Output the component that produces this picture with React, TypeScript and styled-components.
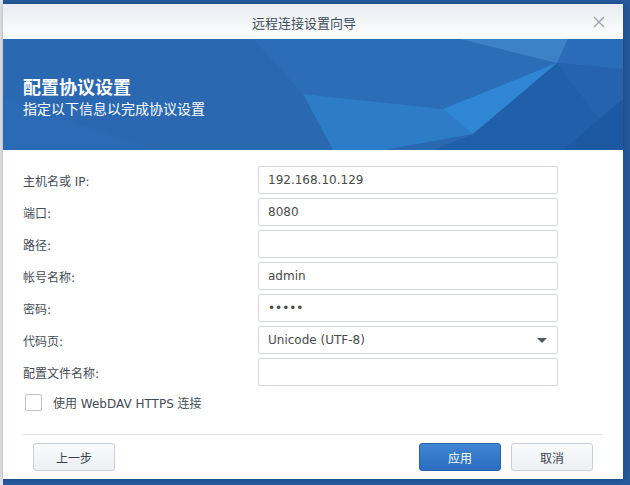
import styled, { createGlobalStyle } from "styled-components";

const GlobalStyle = createGlobalStyle`
  html, body {
    margin: 0;
    padding: 0;
    background: #24599c;
  }
  body {
    font-family: "DejaVu Sans", "Noto Sans CJK SC", sans-serif;
    font-size: 12px;
    color: #444;
  }
  * {
    box-sizing: border-box;
  }
`;

const Page = styled.div`
  width: 630px;
  height: 485px;
  padding: 4px 7px 6px 3px;
  background: linear-gradient(90deg, #dfe3e8 0, #dfe3e8 3px, #24599c 3px);
`;

const Dialog = styled.div`
  width: 620px;
  height: 475px;
  background: #fff;
  display: flex;
  flex-direction: column;
  box-shadow: 0 0 4px rgba(0, 0, 0, 0.25);
`;

const TitleBar = styled.div`
  height: 35px;
  display: grid;
  grid-template-columns: 1fr auto 1fr;
  align-items: center;
  background: linear-gradient(180deg, #e7ebf0 0%, #f6f8fa 60%, #fbfcfd 100%);
  padding-right: 18px;
`;

const Title = styled.div`
  grid-column: 2;
  font-family: "Noto Sans CJK SC", sans-serif;
  font-size: 13px;
  color: #3c4b5c;
  padding-top: 1px;
`;

const CloseButton = styled.div`
  grid-column: 3;
  justify-self: end;
  width: 12px;
  height: 12px;
  display: flex;
`;

const Banner = styled.div`
  position: relative;
  height: 111px;
  background: #2a68b1;
  overflow: hidden;
  padding: 34px 20px 0;
  color: #fff;
`;

const BannerArt = styled.svg`
  position: absolute;
  inset: 0;
`;

const BannerText = styled.div`
  position: relative;
  display: flex;
  flex-direction: column;
`;

const Heading = styled.div`
  font-family: "Noto Sans CJK SC", sans-serif;
  font-weight: 700;
  font-size: 18px;
  line-height: 26px;
`;

const SubHeading = styled.div`
  font-family: "Noto Sans CJK SC", sans-serif;
  font-size: 14px;
  line-height: 20px;
  margin-top: -1px;
`;

const Form = styled.div`
  flex: 1;
  padding: 16px 20px 0;
  display: flex;
  flex-direction: column;
`;

const Grid = styled.div`
  display: grid;
  grid-template-columns: 235px 300px;
  grid-auto-rows: 28px;
  row-gap: 4px;
  align-items: center;
`;

const Label = styled.div`
  color: #444c55;
`;

const Field = styled.input`
  width: 100%;
  height: 28px;
  border: 1px solid #d3d8de;
  border-radius: 2px;
  padding: 0 9px;
  font-family: "DejaVu Sans", "Noto Sans CJK SC", sans-serif;
  font-size: 12px;
  color: #4a4a4a;
  background: #fff;
  outline: none;
`;

const Select = styled.div`
  height: 28px;
  border: 1px solid #d3d8de;
  border-radius: 2px;
  padding: 0 10px 0 9px;
  display: flex;
  align-items: center;
  justify-content: space-between;
  color: #4a4a4a;
`;

const Caret = styled.span`
  width: 0;
  height: 0;
  border-left: 5px solid transparent;
  border-right: 5px solid transparent;
  border-top: 5px solid #505860;
`;

const CheckRow = styled.label`
  margin-top: 8px;
  padding-left: 2px;
  display: flex;
  align-items: center;
  gap: 11px;
  color: #444c55;
`;

const Box = styled.span`
  width: 17px;
  height: 17px;
  border: 1px solid #bcc3cb;
  border-radius: 2px;
  background: #fff;
`;

const Separator = styled.div`
  height: 1px;
  margin: 0 20px;
  background: #dfe3e8;
`;

const Footer = styled.div`
  display: flex;
  gap: 10px;
  padding: 8px 30px;
`;

const Spacer = styled.div`
  flex: 1;
`;

const Button = styled.button<{ $primary?: boolean }>`
  width: 82px;
  height: 28px;
  border-radius: 3px;
  font-family: "Noto Sans CJK SC", sans-serif;
  font-size: 12px;
  border: 1px solid ${(p) => (p.$primary ? "#2862ad" : "#c9cfd7")};
  color: ${(p) => (p.$primary ? "#fff" : "#3a4450")};
  background: ${(p) =>
    p.$primary
      ? "linear-gradient(180deg, #3f86d4 0%, #2b6cbf 100%)"
      : "linear-gradient(180deg, #f9fafc 0%, #edf0f4 100%)"};
`;

const fields = [
  { label: "主机名或 IP:", value: "192.168.10.129" },
  { label: "端口:", value: "8080" },
  { label: "路径:", value: "" },
  { label: "帐号名称:", value: "admin" },
  { label: "密码:", value: "admin", password: true },
];

function App() {
  return (
    <Page>
      <GlobalStyle />
      <Dialog>
        <TitleBar>
          <Title>远程连接设置向导</Title>
          <CloseButton>
            <svg width="12" height="12" viewBox="0 0 12 12">
              <path d="M1 1L11 11M11 1L1 11" stroke="#9aa1a9" strokeWidth="1.4" />
            </svg>
          </CloseButton>
        </TitleBar>
        <Banner>
          <BannerArt width="620" height="111" viewBox="0 0 620 111">
            <polygon points="0,58 150,111 0,111" fill="#2b6bb5" />
            <polygon points="250,0 457,0 554,24 440,70 300,55" fill="#2c6db7" />
            <polygon points="457,0 565,0 554,24" fill="#3d82c6" />
            <polygon points="565,0 620,0 620,30 554,24" fill="#2b6cb8" />
            <polygon points="300,55 440,70 554,24 470,95 380,111 330,111" fill="#2d7cc8" />
            <polygon points="440,70 554,24 470,95" fill="#2f86d2" />
            <polygon points="554,24 620,111 430,111 470,95" fill="#2060ab" />
            <polygon points="554,24 620,30 620,111" fill="#2563ae" />
            <polygon points="560,111 620,60 620,111" fill="#1d58a2" />
          </BannerArt>
          <BannerText>
            <Heading>配置协议设置</Heading>
            <SubHeading>指定以下信息以完成协议设置</SubHeading>
          </BannerText>
        </Banner>
        <Form>
          <Grid>
            {fields.map((f) => (
              <>
                <Label key={f.label}>{f.label}</Label>
                <Field
                  key={f.label + "-in"}
                  type={f.password ? "password" : "text"}
                  value={f.value}
                  readOnly
                />
              </>
            ))}
            <Label>代码页:</Label>
            <Select>
              <span>Unicode (UTF-8)</span>
              <Caret />
            </Select>
            <Label>配置文件名称:</Label>
            <Field type="text" value="" readOnly />
          </Grid>
          <CheckRow>
            <Box />
            <span>使用 WebDAV HTTPS 连接</span>
          </CheckRow>
        </Form>
        <Separator />
        <Footer>
          <Button>上一步</Button>
          <Spacer />
          <Button $primary>应用</Button>
          <Button>取消</Button>
        </Footer>
      </Dialog>
    </Page>
  );
}

export default App;
